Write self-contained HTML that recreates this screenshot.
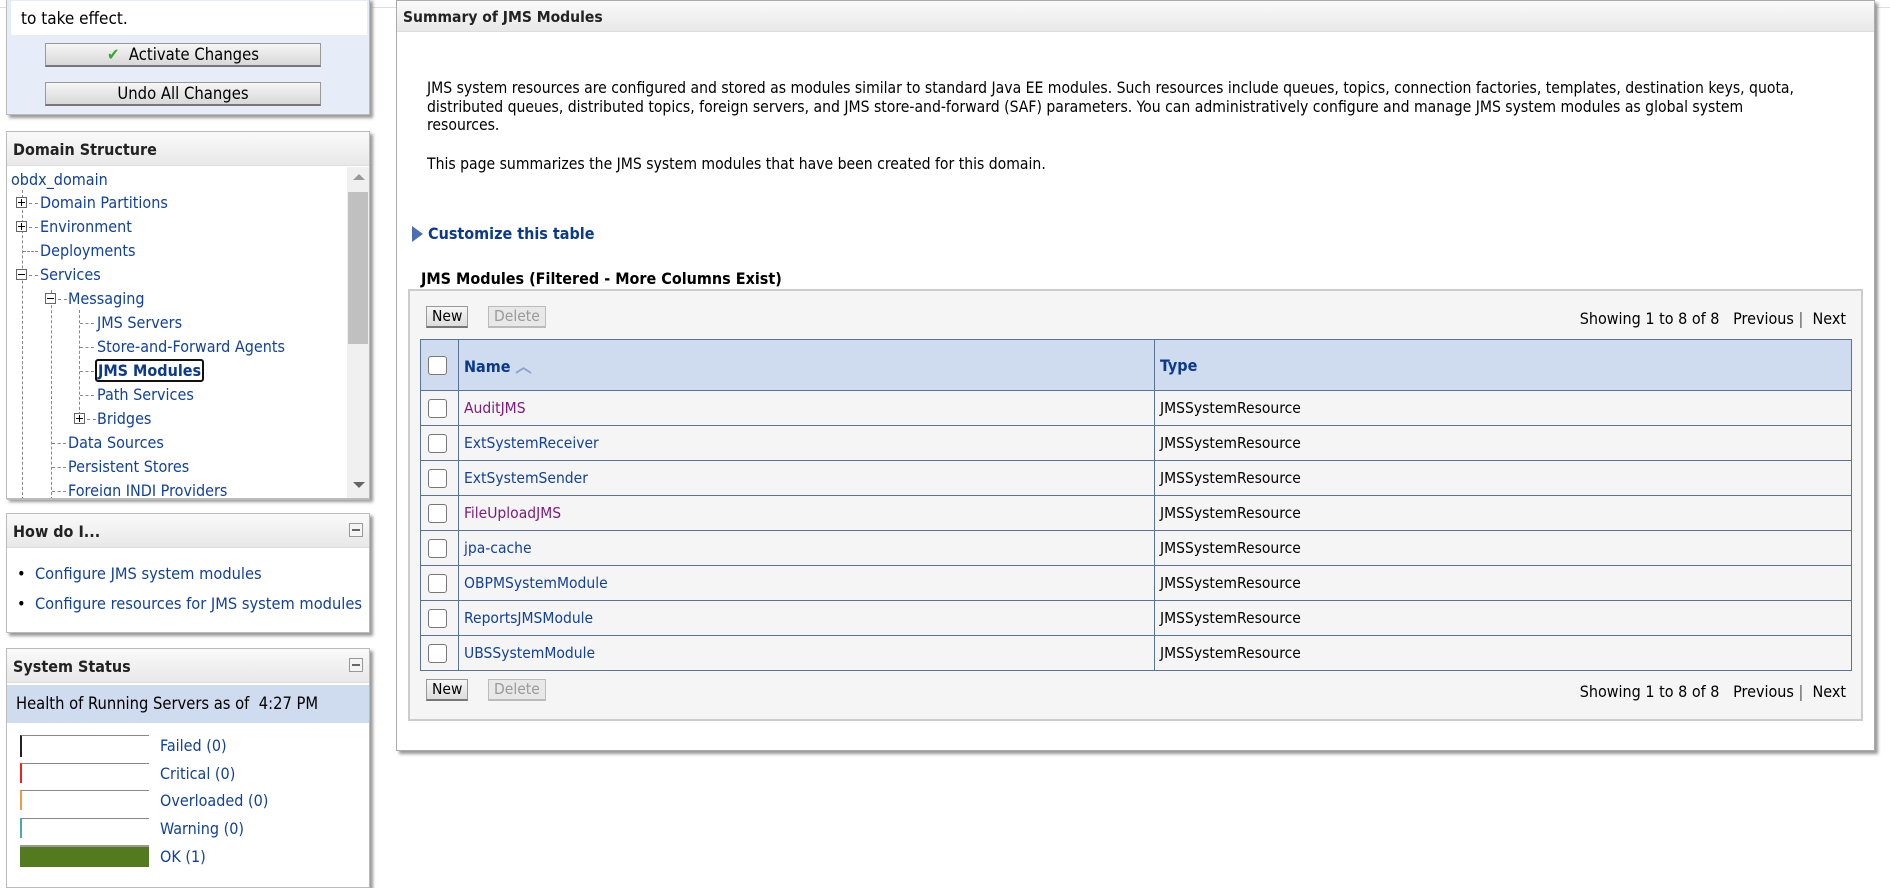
<!DOCTYPE html>
<html><head><meta charset="utf-8"><style>
*{box-sizing:border-box;margin:0;padding:0}
body{width:1890px;height:870px;overflow:hidden;background:#fff;font-family:"DejaVu Sans Condensed","Liberation Sans",sans-serif;font-size:14.5px;color:#000;position:relative}
.a{position:absolute}
a,.lk{color:#12419a;text-decoration:none}
.vis{color:#7d1a7d}
.panel{position:absolute;background:#fff;border:1px solid #bbb;box-shadow:3px 3px 3px #999}
.ph{height:34px;background:linear-gradient(#fafafa,#e8e8e8);font-weight:bold;font-size:16px;padding:8px 0 0 6px;color:#222;border-bottom:1px solid #ddd}
.btn{position:absolute;background:linear-gradient(#f6f6f6,#d8d8d8);border:1px solid #999;border-bottom:2px solid #777;text-align:center;font-size:16.5px}
.min{position:absolute;right:6px;top:9px;width:14px;height:14px;border:1px solid #999;background:#f4f4f4}
.min:after{content:"";position:absolute;left:2px;right:2px;top:5px;height:2px;background:#666}
.tree div{position:absolute;white-space:nowrap;font-size:16px}
.pm{position:absolute;width:11px;height:11px;border:1px solid #666;background:#fff}
.pm:before{content:"";position:absolute;left:1px;right:1px;top:4px;height:1px;background:#000}
.pm.p:after{content:"";position:absolute;top:1px;bottom:1px;left:4px;width:1px;background:#000}
.dv{position:absolute;border-left:1px dashed #888}
.dh{position:absolute;border-top:1px dashed #888;width:9px}
.sb{position:absolute;border:1px solid #888;border-left-width:2px;background:#fff;border-right:0;border-bottom:0}
table{border-collapse:collapse;position:absolute;left:420px;top:339px;width:1432px}
td{border:1px solid #5a7392;height:35px;font-size:15.5px;padding-left:5px}
tr.h td{height:51px;background:#cfdbee;font-weight:bold}
tr:nth-child(odd):not(.h) td{background:#f5f5f5}
.cb{width:19px;height:19px;border:1px solid #777;border-radius:3px;background:#fff;margin-left:2px}
.sbtn{position:absolute;height:22px;border:1px solid #999;border-bottom:2px solid #777;background:linear-gradient(#f6f6f6,#ddd);font-size:15.5px;padding:0 5px}
.sbtn.d{color:#999;border-color:#bbb;background:#e8e8e8}
.st{position:absolute;right:44px;font-size:16px}
.lbl{position:absolute;left:153px;font-size:16px}
</style></head><body>
<div class="a" style="left:0;top:7px;width:1890px;border-top:1px solid #ddd"></div>

<div class="panel" style="left:6px;top:-2px;width:364px;height:117px;background:#e6edf8">
<div class="a" style="left:4px;top:2px;width:356px;height:34px;background:#fff;padding:8px 0 0 10px;font-size:17px">to take effect.</div>
<div class="btn" style="left:38px;top:44px;width:276px;height:24px;padding-top:1px"><span style="color:#3a3;font-weight:bold">✔</span>&nbsp; Activate Changes</div>
<div class="btn" style="left:38px;top:83px;width:276px;height:24px;padding-top:1px">Undo All Changes</div>
</div>

<div class="panel" style="left:6px;top:131px;width:364px;height:368px">
<div class="ph">Domain Structure</div>
<div class="a" style="left:340px;top:35px;width:22px;height:332px;background:#f0f0f0"></div>
<div class="a" style="left:341px;top:60px;width:20px;height:152px;background:#c0c0c0"></div>
<div class="a" style="left:346px;top:42px;border:6px solid transparent;border-bottom:6px solid #999;border-top:0"></div>
<div class="a" style="left:346px;top:350px;border:6px solid transparent;border-top:6px solid #666;border-bottom:0"></div>
</div>
<div class="tree">
<div class="dv" style="left:22px;top:190px;height:310px"></div>
<div class="dv" style="left:51px;top:290px;height:210px"></div>
<div class="dv" style="left:79px;top:310px;height:105px"></div>
<div class="lk" style="left:11px;top:170px">obdx_domain</div>
<div class="pm p" style="left:16px;top:197px"></div><div class="dh" style="left:29px;top:203px"></div><div class="lk" style="left:40px;top:193px">Domain Partitions</div>
<div class="pm p" style="left:16px;top:221px"></div><div class="dh" style="left:29px;top:227px"></div><div class="lk" style="left:40px;top:217px">Environment</div>
<div class="dh" style="left:23px;top:251px;width:15px"></div><div class="lk" style="left:40px;top:241px">Deployments</div>
<div class="pm" style="left:16px;top:269px"></div><div class="dh" style="left:29px;top:275px"></div><div class="lk" style="left:40px;top:265px">Services</div>
<div class="pm" style="left:45px;top:293px"></div><div class="dh" style="left:58px;top:299px"></div><div class="lk" style="left:68px;top:289px">Messaging</div>
<div class="dh" style="left:80px;top:323px;width:14px"></div><div class="lk" style="left:97px;top:313px">JMS Servers</div>
<div class="dh" style="left:80px;top:347px;width:14px"></div><div class="lk" style="left:97px;top:337px">Store-and-Forward Agents</div>
<div class="dh" style="left:80px;top:371px;width:14px"></div><div class="lk" style="left:95px;top:359px;font-weight:bold;border:2px solid #111;border-radius:3px;padding:0 1px;color:#0b3a8a">JMS Modules</div>
<div class="dh" style="left:80px;top:395px;width:14px"></div><div class="lk" style="left:97px;top:385px">Path Services</div>
<div class="pm p" style="left:74px;top:413px"></div><div class="dh" style="left:87px;top:419px"></div><div class="lk" style="left:97px;top:409px">Bridges</div>
<div class="dh" style="left:52px;top:443px;width:14px"></div><div class="lk" style="left:68px;top:433px">Data Sources</div>
<div class="dh" style="left:52px;top:467px;width:14px"></div><div class="lk" style="left:68px;top:457px">Persistent Stores</div>
<div class="dh" style="left:52px;top:491px;width:14px"></div><div class="lk" style="left:68px;top:481px;height:15px;overflow:hidden">Foreign JNDI Providers</div>
</div>
<div class="a" style="left:7px;top:498px;width:363px;height:2px;background:#bbb"></div>

<div class="panel" style="left:6px;top:513px;width:364px;height:120px">
<div class="ph">How do I...<span class="min"></span></div>
<div class="a" style="left:10px;top:50px;font-size:16.3px;white-space:nowrap">•&nbsp;&nbsp;<a>Configure JMS system modules</a></div>
<div class="a" style="left:10px;top:80px;font-size:16.3px;white-space:nowrap">•&nbsp;&nbsp;<a>Configure resources for JMS system modules</a></div>
</div>

<div class="panel" style="left:6px;top:648px;width:364px;height:240px">
<div class="ph">System Status<span class="min"></span></div>
<div class="a" style="left:0;top:36px;width:362px;height:38px;background:#cfdbee;padding:9px 0 0 9px;font-size:16.4px">Health of Running Servers as of&nbsp; 4:27 PM</div>
<div class="sb" style="left:13px;top:86px;width:129px;height:22px;border-left-color:#222"></div><a class="lbl" style="top:87px">Failed (0)</a>
<div class="sb" style="left:13px;top:114px;width:129px;height:20px;border-left-color:#e22"></div><a class="lbl" style="top:115px">Critical (0)</a>
<div class="sb" style="left:13px;top:141px;width:129px;height:20px;border-left-color:#e9a040"></div><a class="lbl" style="top:142px">Overloaded (0)</a>
<div class="sb" style="left:13px;top:169px;width:129px;height:20px;border-left-color:#4aa"></div><a class="lbl" style="top:170px">Warning (0)</a>
<div class="a" style="left:13px;top:196px;width:129px;height:22px;background:#537a1e;border-top:2px solid #999"></div><a class="lbl" style="top:198px">OK (1)</a>
</div>

<div class="panel" style="left:396px;top:0;width:1479px;height:751px;border-color:#aaa">
<div class="ph" style="height:31px;padding-top:7px;font-size:15.5px">Summary of JMS Modules</div>
<div class="a" style="left:30px;top:78px;width:1380px;line-height:18.5px;font-size:15.6px">JMS system resources are configured and stored as modules similar to standard Java EE modules. Such resources include queues, topics, connection factories, templates, destination keys, quota, distributed queues, distributed topics, foreign servers, and JMS store-and-forward (SAF) parameters. You can administratively configure and manage JMS system modules as global system resources.</div>
<div class="a" style="left:30px;top:154px;font-size:15.6px">This page summarizes the JMS system modules that have been created for this domain.</div>
<div class="a" style="left:15px;top:225px;border-left:11px solid #4a6fb0;border-top:8px solid transparent;border-bottom:8px solid transparent"></div>
<div class="a" style="left:31px;top:223px;font-weight:bold;color:#0b3a8a;font-size:16px">Customize this table</div>
<div class="a" style="left:24px;top:268px;font-weight:bold;font-size:16px">JMS Modules (Filtered - More Columns Exist)</div>
</div>
<div class="a" style="left:408px;top:289px;width:1455px;height:432px;background:#f5f5f5;border:2px solid #ccc"></div>
<div class="sbtn" style="left:426px;top:306px">New</div><div class="sbtn d" style="left:488px;top:306px">Delete</div>
<div class="st" style="top:309px">Showing 1 to 8 of 8 &nbsp; Previous <span style="color:#555">|</span> &nbsp;Next</div>
<table>
<tr class="h"><td style="width:38px"><div class="cb"></div></td><td style="width:696px;color:#0b3a8a;font-size:16px">Name <span style="color:#8aa0c8">︿</span></td><td style="color:#0b3a8a;font-size:16px">Type</td></tr>
<tr><td><div class="cb"></div></td><td class="vis">AuditJMS</td><td>JMSSystemResource</td></tr>
<tr><td><div class="cb"></div></td><td><a>ExtSystemReceiver</a></td><td>JMSSystemResource</td></tr>
<tr><td><div class="cb"></div></td><td><a>ExtSystemSender</a></td><td>JMSSystemResource</td></tr>
<tr><td><div class="cb"></div></td><td class="vis">FileUploadJMS</td><td>JMSSystemResource</td></tr>
<tr><td><div class="cb"></div></td><td><a>jpa-cache</a></td><td>JMSSystemResource</td></tr>
<tr><td><div class="cb"></div></td><td><a>OBPMSystemModule</a></td><td>JMSSystemResource</td></tr>
<tr><td><div class="cb"></div></td><td><a>ReportsJMSModule</a></td><td>JMSSystemResource</td></tr>
<tr><td><div class="cb"></div></td><td><a>UBSSystemModule</a></td><td>JMSSystemResource</td></tr>
</table>
<div class="sbtn" style="left:426px;top:679px">New</div><div class="sbtn d" style="left:488px;top:679px">Delete</div>
<div class="st" style="top:682px">Showing 1 to 8 of 8 &nbsp; Previous <span style="color:#555">|</span> &nbsp;Next</div>
</body></html>
